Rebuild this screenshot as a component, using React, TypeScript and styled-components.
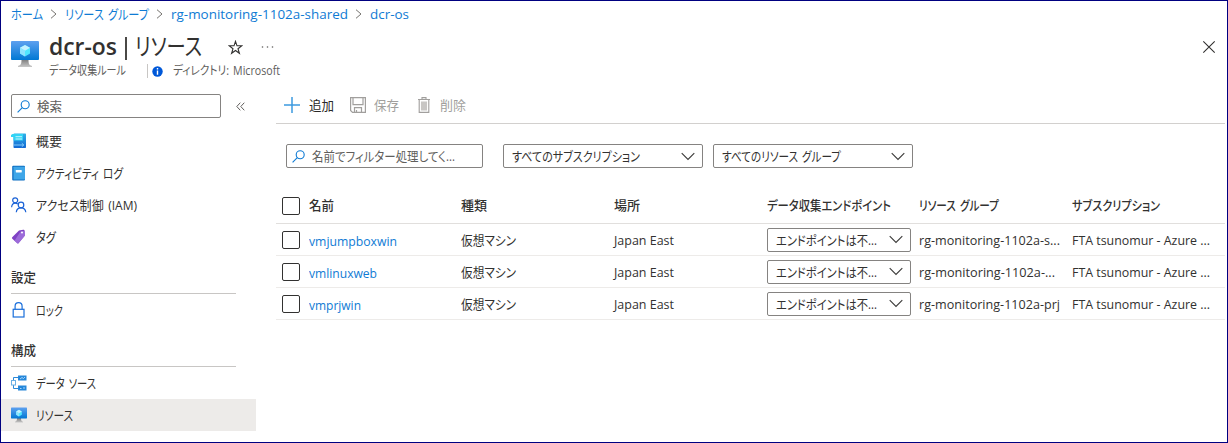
import React, { useLayoutEffect, useRef } from "react";
import styled, { createGlobalStyle, css } from "styled-components";

const GlobalStyle = createGlobalStyle`
  * { box-sizing: border-box; }
  body {
    margin: 0;
    background: #fff;
    color: #323130;
    font-family: "Open Sans", "Noto Sans CJK JP", sans-serif;
    font-size: 13px;
    line-height: 18px;
  }
`;

const FitBox = styled.span<{ $w: number }>`
  display: inline-block;
  flex: none;
  width: ${(p) => p.$w}px;
  white-space: nowrap;
`;
const FitText = styled.span<{ $wide: boolean }>`
  display: inline-block;
  transform-origin: 0 50%;
  font-feature-settings: "palt";
  word-spacing: ${(p) => (p.$wide ? 1.5 : 0)}px;
`;

/* Condenses a label horizontally so that it fills the given width. */
function Fit({ w, children }: { w: number; children: string }) {
  const ref = useRef<HTMLSpanElement>(null);
  useLayoutEffect(() => {
    const el = ref.current;
    if (el && el.offsetWidth) {
      el.style.transform = `scaleX(${w / el.getBoundingClientRect().width})`;
    }
  }, []);
  return (
    <FitBox $w={w}>
      <FitText ref={ref} $wide={/[\u30a0-\u30ff]/.test(children)}>{children}</FitText>
    </FitBox>
  );
}

const Page = styled.div`
  display: flex;
  flex-direction: column;
  width: 1228px;
  height: 443px;
  border: 1px solid #000080;
  overflow: hidden;
`;
const Breadcrumb = styled.nav`
  display: flex;
  align-items: center;
  height: 25px;
  padding-left: 10px;
  color: #0f7bd4;
`;
const Crumb = styled.a`
  display: flex;
`;
const Divider = styled.svg`
  width: 7px;
  height: 10px;
  margin: 1px 8px 0 7px;
  stroke: #75736f;
  fill: none;
`;
const Header = styled.header`
  display: flex;
  height: 58px;
  padding: 5px 11px 0 10px;
`;
const HeaderIcon = styled.div`
  width: 38px;
  padding-top: 9px;
`;
const HeaderText = styled.div`
  flex: 1;
`;
const TitleRow = styled.div`
  display: flex;
  align-items: center;
  height: 30px;
`;
const Title = styled.h1`
  display: flex;
  margin: 0;
  font-size: 24px;
  line-height: 30px;
  font-weight: 600;
`;
const TitleBar = styled.i`
  width: 2px;
  height: 23px;
  margin: 6px 0 0 8px;
  background: #4a4846;
`;
const TitleSection = styled.span`
  margin-left: 8px;
  font-weight: 400;
`;
const Star = styled.svg`
  width: 15px;
  height: 15px;
  margin: 3px 0 0 26px;
`;
const More = styled.svg`
  width: 13px;
  height: 4px;
  margin: 1px 0 0 18px;
`;
const SubRow = styled.div`
  display: flex;
  align-items: center;
  height: 16px;
  margin-top: 2px;
  font-size: 12px;
  line-height: 16px;
  color: #605e5c;
`;
const Info = styled.svg`
  width: 11px;
  height: 11px;
  margin: 0 10px 0 4px;
`;
const Rule = styled.i`
  width: 1px;
  height: 14px;
  margin-left: 21px;
  background: #c8c6c4;
`;
const CloseButton = styled.button`
  width: 14px;
  height: 14px;
  margin: 9px 0 0;
  padding: 0;
  border: 0;
  background: none;
  display: flex;
`;
const Body = styled.div`
  display: flex;
  flex: 1;
`;
const Sidebar = styled.aside`
  width: 255px;
  padding-top: 10px;
`;
const SearchRow = styled.div`
  display: flex;
  align-items: center;
  padding-left: 10px;
  margin-bottom: 7px;
`;
const field = css`
  display: flex;
  align-items: center;
  height: 24px;
  border: 1px solid #858381;
  border-radius: 2px;
`;
const SearchBox = styled.div<{ $w: number }>`
  ${field}
  width: ${(p) => p.$w}px;
  padding-left: 5px;
  gap: 7px;
  color: #605e5c;
`;
const Collapse = styled.svg`
  width: 9px;
  height: 9px;
  margin-left: 15px;
`;
const NavItem = styled.div<{ $active?: boolean }>`
  display: flex;
  align-items: center;
  height: 32px;
  padding-left: 10px;
  gap: 9px;
  background: ${(p) => (p.$active ? "#edebe9" : "transparent")};
  svg { flex: none; }
`;
const NavHeading = styled.div`
  width: 225px;
  height: 41px;
  margin-left: 10px;
  padding-top: 15px;
  border-bottom: 1px solid #c8c6c4;
  font-weight: 500;
`;
const Main = styled.main`
  flex: 1;
  padding: 0 2px 0 20px;
`;
const Toolbar = styled.div`
  display: flex;
  align-items: center;
  height: 40px;
  padding: 3px 0 0 8px;
  border-bottom: 1px solid #d2d0ce;
`;
const Command = styled.div<{ $gap: number; $after?: number; $disabled?: boolean }>`
  display: flex;
  align-items: center;
  gap: ${(p) => p.$gap}px;
  margin-right: ${(p) => p.$after || 0}px;
  color: ${(p) => (p.$disabled ? "#a19f9d" : "#292827")};
`;
const Filters = styled.div`
  display: flex;
  padding: 20px 0 0 10px;
  gap: 10px;
`;
const Select = styled.div<{ $w: number; $ml?: number }>`
  ${field}
  justify-content: space-between;
  width: ${(p) => p.$w}px;
  margin-left: ${(p) => p.$ml || 0}px;
  padding: 0 7px 0 8px;
  background: #fff;
`;
const Table = styled.div`
  margin-top: 20px;
`;
const Row = styled.div`
  display: grid;
  grid-template-columns: 33px 152px 153px 153px 152px 153px 1fr;
  align-items: center;
  height: 32px;
  border-bottom: 1px solid #edebe9;
`;
const HeadRow = styled(Row)`
  height: 36px;
  border-bottom-color: #e1dfdd;
  font-weight: 500;
`;
const HeadCell = styled.span`
  display: flex;
  padding-bottom: 2px;
`;
const Check = styled.span`
  width: 18px;
  height: 18px;
  margin-left: 6px;
  border: 1px solid #323130;
  border-radius: 2px;
`;
const Link = styled.a`
  display: flex;
  color: #0f7bd4;
  padding-top: 2px;
`;

const Separator = () => (
  <Divider viewBox="0 0 7 10"><path d="M1 .7 6 5 1 9.300" /></Divider>
);
const Chevron = () => (
  <svg width="14" height="9" viewBox="0 0 14 9" fill="none" stroke="#3b3a39" strokeWidth="1.1">
    <path d="M.7 1.200 7 7.500 13.300 1.200" />
  </svg>
);
const Magnifier = () => (
  <svg width="13" height="13" viewBox="0 0 13 13" fill="none" stroke="#0f7bd4" strokeWidth="1.1">
    <circle cx="8.200" cy="4.800" r="4" /><path d="M5.300 7.700.6 12.300" />
  </svg>
);
const Monitor = ({ w, h, id }: { w: number; h: number; id: string }) => (
  <svg width={w} height={h} viewBox="0 0 28 28">
    <defs>
      <linearGradient id={id} x1="0" y1="0" x2="0" y2="1">
        <stop offset="0" stopColor="#5ea0ef" /><stop offset="1" stopColor="#0078d4" />
      </linearGradient>
      <linearGradient id={id + "s"} x1="0" y1="0" x2="0" y2="1">
        <stop offset="0" stopColor="#777" /><stop offset="1" stopColor="#c8c8c8" />
      </linearGradient>
    </defs>
    <path d="M10.500 19h7c0 5 .5 6 3.500 7v1H7v-1c3-1 3.500-2 3.500-7z" fill={`url(#${id}s)`} />
    <rect y="1" width="28" height="19" rx="1" fill={`url(#${id})`} />
    <path d="m14 5 5 2.800v5.700L14 16.500l-5-3V7.800z" fill="#50e6ff" />
    <path d="m14 5 5 2.800-5 3-5-3z" fill="#c3f1ff" />
    <path d="M9 7.800l5 3v5.700l-5-3z" fill="#8fe3ff" />
  </svg>
);
const OverviewIcon = () => (
  <svg width="16" height="16" viewBox="0 0 16 16">
    <defs><linearGradient id="ov" x1="0" y1="0" x2="0" y2="1"><stop stopColor="#2fb1e8" /><stop offset="1" stopColor="#1268d3" /></linearGradient></defs>
    <rect x="2.500" y=".5" width="12.500" height="14.500" rx=".7" fill="url(#ov)" />
    <path d="M1.500 1H12v6.500H2.500V4H0V2z" fill="#32d4f5" />
    <path d="M4.500 3.700h6.500M4.500 6h6.500" stroke="#c3f6ff" />
    <path d="M3 12h9.500M10.800 10.200l2 1.800-2 1.700" fill="none" stroke="#8fd4ff" strokeWidth=".9" />
  </svg>
);
const LogIcon = () => (
  <svg width="16" height="16" viewBox="0 0 16 16">
    <rect x="1.200" y=".7" width="12.800" height="14.800" rx="1" fill="#0f6fc2" />
    <rect x="2.500" y="1.700" width="11.500" height="12.800" rx=".6" fill="#3fa6e8" />
    <rect x="4.800" y="5" width="6" height="2.500" rx=".4" fill="#fff" />
  </svg>
);
const PeopleIcon = () => (
  <svg width="16" height="16" viewBox="0 0 16 16" fill="none" stroke="#1a62d6" strokeWidth="1.200">
    <circle cx="4.200" cy="3.300" r="2.500" /><path d="M.6 10.300C.8 7.600 2 6.100 4.200 6.100c1.100 0 2 .4 2.600 1" />
    <circle cx="10" cy="8" r="2.800" /><path d="M5.300 15.300c.2-2.800 2-4.400 4.700-4.400s4.500 1.600 4.800 4.400" />
  </svg>
);
const TagIcon = () => (
  <svg width="16" height="16" viewBox="0 0 16 16">
    <path d="M8 1.500 12.200.8c.8 0 1.400.5 1.500 1.300L14 6.500 7.800 14c-.4.600-1.100.7-1.600.2L1.300 9.700c-.5-.5-.5-1-.1-1.500z" fill="#7f42c4" />
    <path d="M9.500 2.500 13.700 2l.3 4.500L7.600 14c-.4.500-.9.600-1.400.2L3.500 11.700z" fill="#a67ae0" opacity=".75" />
    <circle cx="11" cy="3.500" r="1" fill="#fff" />
  </svg>
);
const LockIcon = () => (
  <svg width="16" height="16" viewBox="0 0 16 16" fill="none" stroke="#1a6fdb" strokeWidth="1.200">
    <rect x="2.200" y="7.300" width="10.800" height="7.700" /><path d="M4.100 7.300V4.200a3.500 3.500 0 0 1 7 0v3.100" />
  </svg>
);
const SourceIcon = () => (
  <svg width="16" height="16" viewBox="0 0 16 16" fill="none" stroke="#2b88d8">
    <path d="M2.500 5.500V2.500H7M2.500 10v3.500H7" />
    <rect x=".5" y="5.500" width="4" height="4.500" fill="#fff" stroke="#69afe5" />
    <rect x="7.500" y="1" width="7.500" height="4" fill="#1f86dc" /><rect x="7.500" y="11" width="7.500" height="4" fill="#1f86dc" />
    <path d="M9 4l2-1.500 1.500 1L14 2M9 13.500h1.500M12 13h2" stroke="#cfe9ff" strokeWidth=".8" />
  </svg>
);

const rows = [
  { name: "vmjumpboxwin", nameW: 88, group: "rg-monitoring-1102a-s...", groupW: 141 },
  { name: "vmlinuxweb", nameW: 68, group: "rg-monitoring-1102a-...", groupW: 136 },
  { name: "vmprjwin", nameW: 52, group: "rg-monitoring-1102a-prj", groupW: 141 },
];

export default function App() {
  return (
    <>
      <GlobalStyle />
      <Page>
        <Breadcrumb>
          <Crumb><Fit w={32}>ホーム</Fit></Crumb><Separator />
          <Crumb><Fit w={84}>リソース グループ</Fit></Crumb><Separator />
          <Crumb><Fit w={177}>rg-monitoring-1102a-shared</Fit></Crumb><Separator />
          <Crumb><Fit w={39}>dcr-os</Fit></Crumb>
        </Breadcrumb>
        <Header>
          <HeaderIcon><Monitor w={28} h={28} id="monitorLarge" /></HeaderIcon>
          <HeaderText>
            <TitleRow>
              <Title>
                <Fit w={68}>dcr-os</Fit>
                <TitleBar />
                <TitleSection><Fit w={67}>リソース</Fit></TitleSection>
              </Title>
              <Star viewBox="0 0 15 15" fill="none" stroke="#323130" strokeWidth="1.100">
                <path d="M7.500 1.300 9 5.800h4.800L10 8.700l1.400 4.600-3.900-2.800-3.900 2.800L5 8.700 1.200 5.800H6z" />
              </Star>
              <More viewBox="0 0 13 4" fill="#605e5c"><circle cx="1.500" cy="2" r=".8" /><circle cx="6.500" cy="2" r=".8" /><circle cx="11.500" cy="2" r=".8" /></More>
            </TitleRow>
            <SubRow>
              <Fit w={77}>データ収集ルール</Fit>
              <Rule />
              <Info viewBox="0 0 11 11">
                <circle cx="5.500" cy="5.500" r="5.200" fill="#0058d8" />
                <path d="M5.500 2v1.500M5.500 4.500v4.300" stroke="#fff" strokeWidth="1.400" />
              </Info>
              <Fit w={107}>ディレクトリ: Microsoft</Fit>
            </SubRow>
          </HeaderText>
          <CloseButton aria-label="閉じる">
            <svg width="14" height="14" viewBox="0 0 14 14" stroke="#323130" strokeWidth="1.100"><path d="M1.300 1.300l11.400 11.400M12.700 1.300 1.300 12.700" /></svg>
          </CloseButton>
        </Header>
        <Body>
          <Sidebar>
            <SearchRow>
              <SearchBox $w={210}><Magnifier /><Fit w={25}>検索</Fit></SearchBox>
              <Collapse viewBox="0 0 9 9" fill="none" stroke="#605e5c"><path d="M4.300.7.8 4.500l3.500 3.800M8.300.7 4.800 4.500l3.500 3.800" /></Collapse>
            </SearchRow>
            <NavItem><OverviewIcon /><Fit w={26}>概要</Fit></NavItem>
            <NavItem><LogIcon /><Fit w={87}>アクティビティ ログ</Fit></NavItem>
            <NavItem><PeopleIcon /><Fit w={101}>アクセス制御 (IAM)</Fit></NavItem>
            <NavItem><TagIcon /><Fit w={20}>タグ</Fit></NavItem>
            <NavHeading><Fit w={25}>設定</Fit></NavHeading>
            <NavItem><LockIcon /><Fit w={27}>ロック</Fit></NavItem>
            <NavHeading><Fit w={25}>構成</Fit></NavHeading>
            <NavItem><SourceIcon /><Fit w={60}>データ ソース</Fit></NavItem>
            <NavItem $active><Monitor w={16} h={16} id="monitorSmall" /><Fit w={37}>リソース</Fit></NavItem>
          </Sidebar>
          <Main>
            <Toolbar>
              <Command $gap={9} $after={16}>
                <svg width="16" height="16" viewBox="0 0 16 16" stroke="#3c9ae0" strokeWidth="1.500"><path d="M8 0v16M0 8h16" /></svg>
                <Fit w={25}>追加</Fit>
              </Command>
              <Command $gap={8} $after={19} $disabled>
                <svg width="16" height="16" viewBox="0 0 16 16" fill="none" stroke="#a19f9d" strokeWidth="1.200"><path d="M.6.6h14.800v14.800H2.500L.6 13.500zM3 .6v7h10v-7M4.500 15.400v-4.800h7v4.800M6.500 13v2.400" /></svg>
                <Fit w={25}>保存</Fit>
              </Command>
              <Command $gap={10} $disabled>
                <svg width="12" height="16" viewBox="0 0 12 16" fill="none" stroke="#a19f9d" strokeWidth="1.100"><path d="M0 2.500h12M4 2.500V.6h4v1.900M1.200 2.500v12.900h9.600V2.500" /><path d="M3.500 5h5v8h-5z" fill="#c8c6c4" stroke="#c8c6c4" /></svg>
                <Fit w={26}>削除</Fit>
              </Command>
            </Toolbar>
            <Filters>
              <SearchBox $w={197}><Magnifier /><Fit w={143}>名前でフィルター処理してく...</Fit></SearchBox>
              <Select $w={200} $ml={10}><Fit w={128}>すべてのサブスクリプション</Fit><Chevron /></Select>
              <Select $w={200}><Fit w={119}>すべてのリソース グループ</Fit><Chevron /></Select>
            </Filters>
            <Table>
              <HeadRow>
                <Check />
                <HeadCell><Fit w={25}>名前</Fit></HeadCell>
                <HeadCell><Fit w={26}>種類</Fit></HeadCell>
                <HeadCell><Fit w={26}>場所</Fit></HeadCell>
                <HeadCell><Fit w={124}>データ収集エンドポイント</Fit></HeadCell>
                <HeadCell><Fit w={80}>リソース グループ</Fit></HeadCell>
                <HeadCell><Fit w={88}>サブスクリプション</Fit></HeadCell>
              </HeadRow>
              {rows.map((r) => (
                <Row key={r.name}>
                  <Check />
                  <Link><Fit w={r.nameW}>{r.name}</Fit></Link>
                  <Fit w={55}>仮想マシン</Fit>
                  <Fit w={60}>Japan East</Fit>
                  <Select $w={144}><Fit w={101}>エンドポイントは不...</Fit><Chevron /></Select>
                  <Fit w={r.groupW}>{r.group}</Fit>
                  <Fit w={138}>FTA tsunomur - Azure ...</Fit>
                </Row>
              ))}
            </Table>
          </Main>
        </Body>
      </Page>
    </>
  );
}
